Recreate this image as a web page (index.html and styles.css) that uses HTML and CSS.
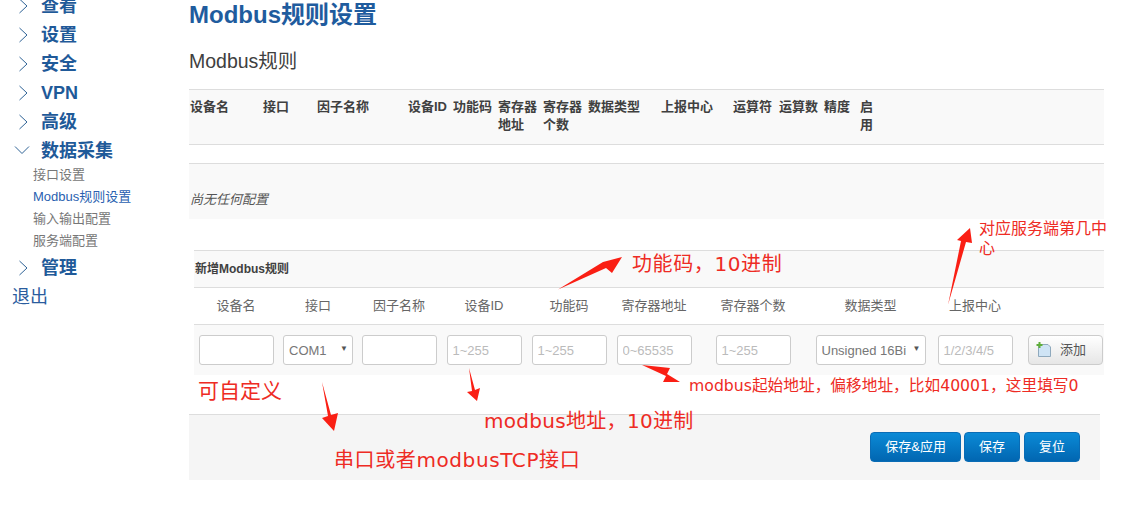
FILE: index.html
```html
<!DOCTYPE html>
<html lang="zh-CN">

<head>
  <meta charset="UTF-8">
  <meta name="viewport" content="width=device-width, initial-scale=1.0">
  <title>Modbus规则设置</title>
  <link rel="stylesheet" href="styles.css">
</head>

<body>
  <div class="page">
    <!-- 左侧菜单 -->
    <aside class="sidebar">
      <ul class="menu">
        <li class="menu-item"><svg class="chevron" viewBox="0 0 10 16"><path d="M1.5 1 L9 8 L1.5 15"/></svg>查看</li>
        <li class="menu-item"><svg class="chevron" viewBox="0 0 10 16"><path d="M1.5 1 L9 8 L1.5 15"/></svg>设置</li>
        <li class="menu-item"><svg class="chevron" viewBox="0 0 10 16"><path d="M1.5 1 L9 8 L1.5 15"/></svg>安全</li>
        <li class="menu-item"><svg class="chevron" viewBox="0 0 10 16"><path d="M1.5 1 L9 8 L1.5 15"/></svg>VPN</li>
        <li class="menu-item"><svg class="chevron" viewBox="0 0 10 16"><path d="M1.5 1 L9 8 L1.5 15"/></svg>高级</li>
        <li class="menu-item"><svg class="chevron-open" viewBox="0 0 16 10"><path d="M1 1.5 L8 8.5 L15 1.5"/></svg>数据采集</li>
        <li class="sub-item">接口设置</li>
        <li class="sub-item sub-active">Modbus规则设置</li>
        <li class="sub-item">输入输出配置</li>
        <li class="sub-item">服务端配置</li>
        <li class="menu-item"><svg class="chevron" viewBox="0 0 10 16"><path d="M1.5 1 L9 8 L1.5 15"/></svg>管理</li>
      </ul>
      <a class="logout" href="javascript:void(0);">退出</a>
    </aside>

    <main class="content">
      <h2 class="page-title">Modbus规则设置</h2>
      <h3 class="section-title">Modbus规则</h3>

      <div class="rule-head">
        <div>设备名</div>
        <div>接口</div>
        <div>因子名称</div>
        <div>设备ID</div>
        <div>功能码</div>
        <div>寄存器地址</div>
        <div>寄存器个数</div>
        <div>数据类型</div>
        <div>上报中心</div>
        <div>运算符</div>
        <div>运算数</div>
        <div>精度</div>
        <div class="narrow">启用</div>
      </div>
      <div class="rule-spacer"></div>
      <div class="rule-empty"><em>尚无任何配置</em></div>

      <div class="add-section">
        <div class="add-title">新增Modbus规则</div>
        <div class="add-grid add-labels">
          <div>设备名</div>
          <div>接口</div>
          <div>因子名称</div>
          <div>设备ID</div>
          <div>功能码</div>
          <div>寄存器地址</div>
          <div>寄存器个数</div>
          <div>数据类型</div>
          <div>上报中心</div>
          <div></div>
        </div>
        <div class="add-grid add-inputs">
          <div><input class="field" type="text"></div>
          <div><span class="select-wrap"><select class="field select-port"><option>COM1</option></select></span></div>
          <div><input class="field" type="text"></div>
          <div><input class="field" type="text" placeholder="1~255"></div>
          <div><input class="field" type="text" placeholder="1~255"></div>
          <div><input class="field" type="text" placeholder="0~65535"></div>
          <div><input class="field" type="text" placeholder="1~255"></div>
          <div><span class="select-wrap"><select class="field select-type"><option>Unsigned 16Bit</option></select></span></div>
          <div><input class="field" type="text" placeholder="1/2/3/4/5"></div>
          <div class="add-cell">
            <button class="btn-add" type="button">
              <svg viewBox="0 0 16 16" width="16" height="16">
                <path d="M2.5 2.5 H12 L14.5 5 V14.5 H2.5 Z" fill="#cfe4f5" stroke="#8fa9bd"/>
                <path d="M3.5 0 V6 M0.5 3 H6.5" stroke="#5fae3a" stroke-width="2" fill="none"/>
              </svg>
              <span class="btn-add-text">添加</span>
            </button>
          </div>
        </div>
      </div>

      <div class="actions">
        <button class="btn" type="button">保存&amp;应用</button>
        <button class="btn" type="button">保存</button>
        <button class="btn" type="button">复位</button>
      </div>
    </main>
  </div>

  <!-- 截图上的红色标注 -->
  <svg class="arrows" viewBox="0 0 1124 517" width="1124" height="517">
    <polygon points="558,289.5 603,262 622,257 612,273 606,268"/>
    <polygon points="948,305 961,241 957,240 970,228 972,243 966,242"/>
    <polygon points="322,382 331,415 338,413 334,431 322,418 328,416"/>
    <polygon points="469,368 475,390 480,388 477,401 467,392 472,391"/>
    <polygon points="642,365 670,368 667,374 680,382 663,382 666,376"/>
  </svg>
  <div class="note note-code">功能码，10进制</div>
  <div class="note note-center">对应服务端第几中心</div>
  <div class="note note-name">可自定义</div>
  <div class="note note-addr">modbus地址，10进制</div>
  <div class="note note-port">串口或者modbusTCP接口</div>
  <div class="note note-start">modbus起始地址，偏移地址，比如40001，这里填写0</div>
</body>

</html>
```

FILE: styles.css
```css
* {
  box-sizing: border-box;
}

body {
  margin: 0;
  height: 517px;
  overflow: hidden;
  position: relative;
  background: #fff;
  font-family: "Liberation Sans", "Noto Sans CJK SC", sans-serif;
  color: #404040;
}

.page {
  display: flex;
}

/* sidebar */
.sidebar {
  width: 189px;
  flex: none;
  margin-top: -10px;
}

.menu {
  list-style: none;
  margin: 0;
  padding: 0;
}

.menu-item {
  height: 29px;
  line-height: 33px;
  padding-left: 41px;
  position: relative;
  font-size: 18px;
  font-weight: bold;
  color: #1f5a99;
}

.chevron,
.chevron-open {
  position: absolute;
  fill: none;
  stroke: #2f6396;
  stroke-width: 1;
}

.chevron {
  left: 18px;
  top: 8px;
  width: 10px;
  height: 16px;
}

.chevron-open {
  left: 14px;
  top: 10px;
  width: 16px;
  height: 10px;
}

.sub-item {
  height: 22px;
  line-height: 22px;
  padding-left: 33px;
  font-size: 13px;
  color: #777;
}

.sub-active {
  color: #2a5fb0;
}

.logout {
  display: block;
  height: 29px;
  line-height: 29px;
  margin-top: 2px;
  padding-left: 12px;
  font-size: 18px;
  color: #2a5c9e;
  text-decoration: none;
}

/* main */
.content {
  width: 915px;
  flex: none;
}

.page-title {
  margin: 0;
  height: 29px;
  line-height: 29px;
  font-size: 24px;
  font-weight: bold;
  color: #1f5c9e;
}

.section-title {
  margin: 18px 0 0;
  height: 28px;
  line-height: 28px;
  font-size: 19.5px;
  font-weight: normal;
  color: #404040;
}

.rule-head {
  display: grid;
  grid-template-columns: 73px 54px 91px 45px 45px 45px 45px 73px 72px 46px 45px 36px 244px;
  margin-top: 14px;
  height: 56px;
  padding: 8px 0 0 1px;
  background: #f9f9f9;
  border-top: 1px solid #ddd;
  border-bottom: 1px solid #ddd;
  font-size: 13px;
  font-weight: bold;
  line-height: 18px;
}

.rule-head div {
  width: 40px;
  white-space: normal;
}

.rule-head div:nth-child(-n+4),
.rule-head div:nth-child(8),
.rule-head div:nth-child(9) {
  width: auto;
  white-space: nowrap;
}

.rule-head .narrow {
  width: 14px;
}

.rule-spacer {
  height: 19px;
  border-bottom: 1px solid #ddd;
}

.rule-empty {
  display: flex;
  align-items: flex-end;
  height: 55px;
  padding: 0 0 10px 1px;
  background: #f9f9f9;
  font-size: 13px;
  line-height: 18px;
  color: #555;
}

.add-section {
  margin: 31px 0 0 5px;
}

.add-title {
  height: 38px;
  line-height: 36px;
  padding-left: 1px;
  background: #f9f9f9;
  border-top: 1px solid #ddd;
  border-bottom: 1px solid #ddd;
  font-size: 12px;
  font-weight: bold;
}

.add-grid {
  display: grid;
  grid-template-columns: 84px 80px 82px 88px 82px 88px 110px 125px 84px 87px;
}

.add-grid > div {
  display: flex;
  justify-content: center;
  align-items: center;
}

.add-labels {
  height: 37px;
  padding-bottom: 3px;
  border-bottom: 1px solid #ddd;
  font-size: 13px;
  color: #666;
}

.add-inputs {
  height: 50px;
  background: #f9f9f9;
}

.field {
  width: 75px;
  height: 30px;
  padding: 0 5px;
  background: #fff;
  border: 1px solid #ccc;
  border-radius: 3px;
  font-family: inherit;
  font-size: 13px;
  color: #777;
}

.field::placeholder {
  color: #bbb;
}

.select-wrap {
  display: block;
  position: relative;
}

.select-wrap::after {
  content: "▼";
  position: absolute;
  right: 5px;
  top: 9px;
  font-size: 8px;
  line-height: 10px;
  color: #555;
}

select.field {
  display: block;
  appearance: none;
  padding-right: 19px;
}

.select-port {
  width: 70px;
}

.select-type {
  width: 110px;
}

.add-inputs .add-cell {
  justify-content: flex-end;
  padding-right: 1px;
}

.btn-add {
  display: flex;
  align-items: center;
  gap: 8px;
  width: 75px;
  height: 30px;
  padding: 0 0 0 7px;
  background: linear-gradient(#fff, #e6e6e6);
  border: 1px solid #ccc;
  border-radius: 4px;
  font-family: inherit;
  font-size: 13px;
  color: #555;
}

.btn-add-text {
  padding-bottom: 3px;
}

.actions {
  display: flex;
  justify-content: flex-end;
  gap: 3px;
  width: 911px;
  height: 66px;
  margin-top: 39px;
  padding: 17px 20px 0 0;
  background: #f5f5f5;
  border-top: 1px solid #ddd;
}

.btn {
  height: 30px;
  min-width: 56px;
  padding: 0 14px 3px;
  background: linear-gradient(#0b8ad6, #0166b1);
  border: 1px solid #0a6cb5;
  border-radius: 4px;
  font-family: inherit;
  font-size: 13px;
  color: #fff;
}

.btn:last-child {
  margin-left: 1px;
}

/* annotations drawn over the screenshot */
.arrows {
  position: absolute;
  left: 0;
  top: 0;
  pointer-events: none;
}

.arrows polygon {
  fill: #fa1f14;
}

.note {
  position: absolute;
  font-family: "DejaVu Sans", "Noto Sans CJK SC", sans-serif;
  letter-spacing: 0.3px;
  color: #ee2b24;
  white-space: nowrap;
}

.note-code {
  left: 632px;
  top: 250px;
  font-size: 20px;
  line-height: 28px;
  letter-spacing: 0.6px;
}

.note-center {
  left: 979px;
  top: 219px;
  width: 130px;
  font-size: 16px;
  line-height: 20px;
  letter-spacing: 0;
  white-space: normal;
}

.note-name {
  left: 198px;
  top: 376px;
  font-size: 21px;
  line-height: 30px;
  letter-spacing: 0;
}

.note-addr {
  left: 484px;
  top: 407px;
  font-size: 20px;
  line-height: 28px;
}

.note-port {
  left: 334px;
  top: 446px;
  font-size: 20px;
  line-height: 28px;
  letter-spacing: 0.6px;
}

.note-start {
  left: 689px;
  top: 375px;
  font-size: 15.7px;
  line-height: 22px;
  letter-spacing: 0;
}
```
